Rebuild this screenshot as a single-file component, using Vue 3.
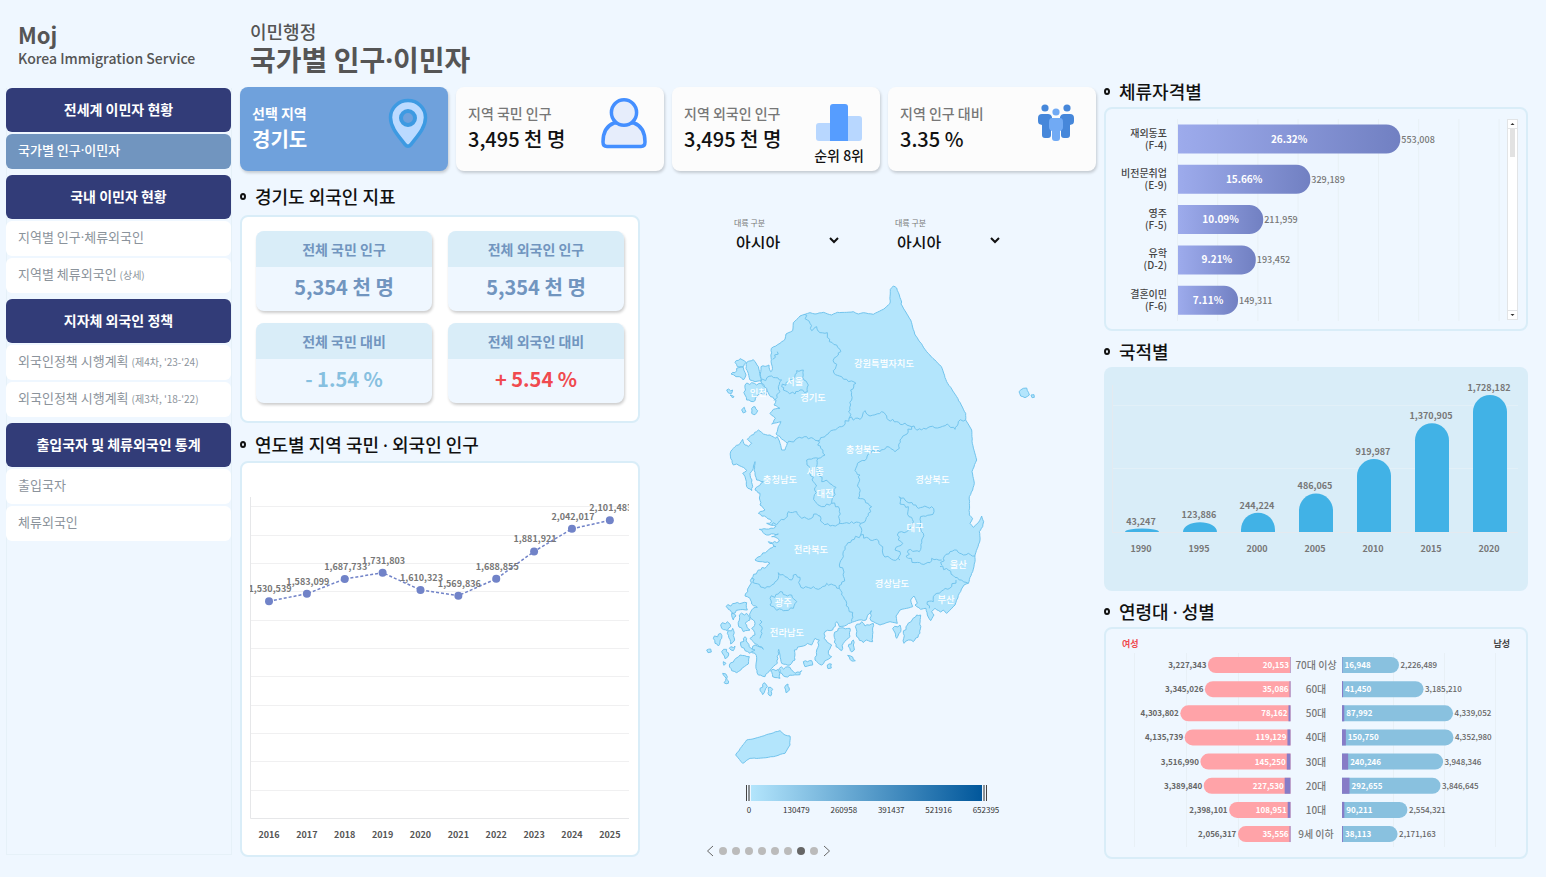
<script setup>
import { h, ref } from 'vue'

const menu = [
  { title: '전세계 이민자 현황', items: [{ label: '국가별 인구·이민자', active: true }] },
  { title: '국내 이민자 현황', items: [{ label: '지역별 인구·체류외국인' }, { label: '지역별 체류외국인', note: '(상세)' }] },
  {
    title: '지자체 외국인 정책',
    items: [
      { label: '외국인정책 시행계획', note: "(제4차, '23-'24)" },
      { label: '외국인정책 시행계획', note: "(제3차, '18-'22)" }
    ]
  },
  { title: '출입국자 및 체류외국인 통계', items: [{ label: '출입국자' }, { label: '체류외국인' }] }
]

/* Korean text whose middle dots are set in a proportional Latin face */
const Dotted = (props) =>
  h('span', props.text.split(/(·)/).map((t) => (t === '·' ? h('span', { class: 'mid-dot' }, t) : t)))
Dotted.props = ['text']

const indicators = [
  { title: '전체 국민 인구', value: '5,354 천 명', tone: '' },
  { title: '전체 외국인 인구', value: '5,354 천 명', tone: '' },
  { title: '전체 국민 대비', value: '- 1.54 %', tone: 'down' },
  { title: '전체 외국인 대비', value: '+ 5.54 %', tone: 'up' }
]

const fmt = (n) => n.toLocaleString('en-US')

/* Yearly population line chart */
const yearly = [1530539, 1583099, 1687733, 1731803, 1610323, 1569836, 1688855, 1881921, 2042017, 2101483].map((v, i) => ({
  year: 2016 + i,
  v,
  x: 27 + i * 37.87,
  y: 355 - (v / 2200000) * 311.6
}))
const yearlyLine = yearly.map((p) => `${p.x},${p.y}`).join(' ')
const yearlyGrid = Array.from({ length: 11 }, (_, i) => Math.round(355 - (i + 1) * 28.33) + 0.5)

/* Visa status bars */
const visas = [
  ['재외동포', '(F-4)', '26.32%', 553008],
  ['비전문취업', '(E-9)', '15.66%', 329189],
  ['영주', '(F-5)', '10.09%', 211959],
  ['유학', '(D-2)', '9.21%', 193452],
  ['결혼이민', '(F-6)', '7.11%', 149311]
].map(([name, code, pct, v], i) => {
  const w = (v / 100000) * 40.2
  const y = 15.5 + i * 40.3
  return { name, code, pct, v, w, y, d: `M72 ${y}h${w - 14}a14 14 0 0 1 14 14v1a14 14 0 0 1 -14 14h${-(w - 14)}z` }
})

/* Nationality columns */
const nations = [43247, 123886, 244224, 486065, 919987, 1370905, 1728182].map((v, i) => {
  const ht = (v / 1000000) * 79.3
  const r = Math.min(17, ht)
  const x = 21 + i * 58
  return { v, year: 1990 + i * 5, x: x + 16, ht, d: `M${x} 165v${-(ht - r)}a17 ${r} 0 0 1 34 0v${ht - r}z` }
})

/* Age and gender pyramid */
const ages = [
  ['70대 이상', 3227343, 20153, 16948, 2226489],
  ['60대', 3345026, 35086, 41450, 3185210],
  ['50대', 4303802, 78162, 87992, 4339052],
  ['40대', 4135739, 119129, 150750, 4352980],
  ['30대', 3516990, 145250, 240246, 3948346],
  ['20대', 3389840, 227530, 292655, 3846645],
  ['10대', 2398101, 108951, 90211, 2554321],
  ['9세 이하', 2056317, 35556, 38113, 2171163]
].map(([name, f, ff, mf, m], i) => {
  const k = 25.6 / 1000000
  const y = 28 + i * 24.15
  const fw = f * k
  const mw = m * k
  return {
    name, f, ff, mf, m, y, fw, mw,
    fp: ff * k,
    mp: mf * k,
    fd: `M184.500 ${y}h${-(fw - 8)}a8 8 0 0 0 0 16h${fw - 8}z`,
    md: `M236 ${y}h${mw - 8}a8 8 0 0 1 0 16h${-(mw - 8)}z`
  }
})

/* Map geometry: points are roughened a little so borders look surveyed */
function rough(str, amp = 4, closed = false) {
  const pts = str.trim().split(/\s+/).map((p) => p.split(',').map(Number))
  if (closed) pts.push(pts[0])
  let seed = 7
  const rnd = () => {
    seed = (seed * 16807) % 2147483647
    return seed / 2147483647 - 0.5
  }
  const out = [pts[0]]
  for (let i = 1; i < pts.length; i++) {
    const [ax, ay] = pts[i - 1]
    const [bx, by] = pts[i]
    const len = Math.hypot(bx - ax, by - ay)
    const n = Math.max(1, Math.round(len / 7))
    for (let j = 1; j < n; j++) {
      const o = rnd() * amp * 2
      const t = j / n
      out.push([ax + (bx - ax) * t - ((by - ay) / len) * o, ay + (by - ay) * t + ((bx - ax) / len) * o])
    }
    out.push([bx, by])
  }
  return 'M' + out.map((p) => p.map((n) => n.toFixed(1)).join(' ')).join('L') + (closed ? 'Z' : '')
}

const mainland = [
  rough(`580,18 590,24 605,66 603,72 632,120 644,162 680,215 724,260 740,305 770,350 797,400 797,420 815,450 817,490 830,540 816,575 823,610 818,630 808,650 808,705 818,715 810,730 820,742 835,728 845,708 851,725 848,740 838,755 840,780 832,805 825,825 825,845 818,875 810,892 805,910 792,915 778,940 765,975 748,992 740,1000 730,990 722,996 705,985 695,995 702,1005 692,1022 682,1005 678,985 662,988 645,975 652,970 642,948 632,960 638,980 620,985 600,990 588,1008 592,1030 570,1025 540,1035 520,1025`, 0.8),
  rough(`520,1025 510,1015 514,992 506,1002 498,1020 470,1022 440,1035 418,1040 410,1025 398,1050 375,1055 372,1075 395,1095 385,1120 395,1130 380,1140 365,1155 345,1140 350,1110 358,1080 345,1075 335,1095 322,1090 310,1098 300,1100 283,1110 285,1140 270,1155 245,1150 240,1125 236,1108 232,1150 215,1165 195,1190 175,1185 168,1165 170,1140 165,1120 150,1112 165,1095 190,1108 160,1085 150,1075 165,1065 155,1045 165,1030 150,1010 155,990 172,982 155,972 150,955 135,948 150,915 155,895 175,870 200,860 210,850 180,845 165,840 185,825 210,805 228,800 205,785 230,788 238,780 215,770 235,762 200,765 178,748 220,745 228,738 200,730 215,724 175,700 195,690 180,675 180,640 165,630`, 3),
  rough(`165,630 172,620 190,605 170,600 162,570 165,545 160,565 150,580 158,620 155,632 140,620 135,590 128,580 140,572 125,560 110,552 100,555 92,535 92,515 105,500 120,490 128,478 135,495 145,500 155,490 142,478 150,470 170,455 175,450 190,462 210,465 225,475 232,470 240,490 245,510 255,510 262,490 250,480 228,462 235,440 243,425 215,432 226,415 210,400 220,388 240,385 222,375 228,360 208,345 200,325 185,310 182,290 183,260 207,255 212,275 216,272 214,205`, 2),
  rough(`214,205 240,190 255,178 258,162 278,152 280,128 300,108 315,103 330,98 345,102 370,97 395,105 412,97 440,97 460,95 475,102 490,98 520,103 550,88 570,70 571,28 580,18`, 0.8)
].map((d, i) => (i ? d.replace(/^M[^L]*/, '') : d)).join('')

const borders = [
  '313,103 322,120 330,130 335,152 350,140 360,158 382,158 388,185 410,195 420,208 415,225 402,235 408,260 402,280 425,290 440,298 468,310 452,330 455,360 450,390 447,415',
  '447,415 480,418 495,392 510,408 545,395 560,408 565,420 590,425 620,435 635,440',
  '635,440 645,445 665,450 690,440 720,442 742,432 765,448 775,425 796,420',
  '635,440 615,465 600,480 598,505 585,515 560,500 540,515 520,510 500,535 480,545 465,572 480,585 475,610 478,640 475,655 495,660 515,680 505,700 495,725 482,730',
  '447,415 425,440 400,450 375,470 352,482 320,470 285,480 262,490',
  '352,482 362,505 375,525 355,535 320,540 330,575 340,605 350,618 342,650 350,670 365,680 380,672 395,670 400,650 408,622 385,605 365,605 360,580 350,560 355,535',
  '395,670 415,680 418,695 418,730',
  '215,735 235,728 262,710 265,695 290,695 300,710 325,718 350,702 360,708 368,728 390,738 420,730 440,728 455,725 482,730 482,765',
  '482,765 455,780 435,800 430,830 418,855 430,870 433,895 418,925',
  '155,895 165,910 195,925 215,915 235,895 235,878 255,890 275,900 280,885 300,892 300,915 310,925 340,920 355,928 380,910 400,915 418,925 425,945 440,970 457,1005 455,1025',
  '482,765 510,780 530,778 548,800 550,825 575,838 600,840',
  '625,835 645,848 665,852 690,848 695,835 725,840',
  '725,855 730,835 750,815 770,810 790,825 805,820 825,828',
  '720,860 745,870 765,892 785,900 805,910',
  '768,900 755,920 730,930 700,950 700,965 682,965 688,985',
  '623,835 625,810 658,815 665,780 670,760 660,740 660,718 670,708 690,705 702,695 695,680 655,685 640,675 615,660 598,650 600,672 625,680 627,710 640,725 635,740 620,755 605,755 592,765 595,780 608,790 585,810 600,815 595,835',
  '210,955 235,942 240,935 262,948 275,945 290,965 280,985 250,992 225,985 210,975 210,955',
  '245,320 265,305 285,290 290,272 310,270 312,300 325,315 322,335 300,330 285,342 262,335 250,330 245,320',
  '182,305 215,288 245,300 235,320 240,335 222,362',
  '180,1020 186,1060 180,1075',
  '232,215 226,232 218,238'
].map((b) => rough(b, 5))

const islands = [
  ['140,247 160,239 175,260 184,302 165,305 150,300 145,280 138,265', 1],
  ['105,247 120,236 138,247 130,260 112,260', 2],
  ['93,282 105,278 110,265 130,262 138,285 130,300 118,290 108,290', 3],
  ['135,315 155,308 170,315 185,310 198,325 200,345 180,340 160,365 140,360 135,345', 4],
  ['80,330 98,330 95,340 84,338', 3],
  ['90,345 102,350 98,354', 1],
  ['125,390 133,382 138,395 130,399', 1],
  ['155,385 165,380 173,392 165,404 155,400', 2],
  ['957,335 970,325 980,324 988,345 975,353 962,348', 1],
  ['993,345 1002,344 1003,352 996,353', 1],
  ['78,980 105,970 140,968 142,990 115,990 100,1000 85,988', 4],
  ['95,1000 108,1008 100,1020', 3],
  ['62,1035 82,1025 92,1040 82,1052 65,1045', 4],
  ['118,1005 140,1000 150,1020 135,1030 150,1050 130,1055 115,1035', 4],
  ['82,1060 98,1045 104,1080 92,1092', 4],
  ['40,1075 62,1060 65,1075 55,1098 45,1090', 4],
  ['20,1110 32,1107 34,1116 24,1118', 1],
  ['65,1115 80,1108 86,1125 75,1136', 4],
  ['88,1105 105,1098 100,1112', 3],
  ['122,1095 135,1070 148,1100 165,1110 150,1120 135,1112', 4],
  ['88,1155 120,1125 148,1130 145,1152 110,1178 95,1172', 2],
  ['68,1180 82,1190 85,1210 72,1208 78,1195', 4],
  ['70,1145 78,1150 72,1156', 1],
  ['180,1232 192,1208 202,1220 188,1244', 3],
  ['205,1222 218,1228 212,1248 204,1240', 3],
  ['254,1222 264,1212 268,1230 258,1238', 2],
  ['212,1172 235,1168 240,1195 218,1190', 3],
  ['238,1165 270,1162 285,1180 305,1172 300,1184 255,1190 240,1178', 4],
  ['310,1145 335,1142 338,1155 315,1160', 2],
  ['382,1155 394,1152 394,1164 384,1166', 2],
  ['402,1065 415,1045 450,1045 450,1070 430,1090 425,1112 408,1100', 3],
  ['445,1100 460,1080 463,1110 455,1116', 3],
  ['443,1126 452,1128 466,1142 455,1143', 2],
  ['466,1040 485,1025 495,1038 520,1030 518,1085 500,1080 490,1088 470,1070', 3],
  ['578,1045 600,1035 602,1055 590,1075', 3],
  ['610,1060 622,1035 650,1005 662,1005 660,1060 640,1085 625,1080 612,1090', 3],
  ['107,1425 125,1400 140,1380 165,1375 240,1352 255,1365 270,1368 270,1395 255,1420 220,1430 175,1435 150,1435 128,1450 118,1438', 1]
].map(([p, a]) => rough(p, a, true))

const regions = [
  ['강원특별자치도', 552, 252], ['경기도', 339, 354], ['서울', 284, 306], ['인천', 175, 339],
  ['충청북도', 489, 510], ['세종', 346, 575], ['충청남도', 240, 599], ['대전', 375, 640],
  ['경상북도', 697, 599], ['전라북도', 333, 808], ['대구', 645, 742], ['울산', 775, 854],
  ['경상남도', 576, 911], ['부산', 738, 959], ['광주', 250, 967], ['전라남도', 261, 1058]
]

const continentA = ref('아시아')
const continentB = ref('아시아')
const page = ref(6)
</script>

<template>
  <div class="page">
    <aside class="side">
      <div class="brand">
        <strong>Moj</strong>
        <span>Korea Immigration Service</span>
      </div>
      <nav class="menu">
        <section v-for="g in menu" :key="g.title" class="group">
          <h2>{{ g.title }}</h2>
          <a v-for="it in g.items" :key="it.label + it.note" href="#" :class="{ active: it.active }"><Dotted :text="it.label" /><small v-if="it.note">{{ it.note }}</small></a>
        </section>
      </nav>
    </aside>

    <main class="main">
      <header class="heading">
        <p>이민행정</p>
        <h1><Dotted text="국가별 인구·이민자" /></h1>
      </header>

      <div class="cards">
        <article class="card picked">
          <div><span>선택 지역</span><b>경기도</b></div>
          <figure>
            <svg width="48" height="52" viewBox="0 0 48 52">
              <path d="M24 3.500c-9.500 0-17.500 7.500-17.500 17 0 11 9.500 20 14.500 27q3 3.500 6 0c5-7 14.500-16 14.500-27 0-9.500-8-17-17.500-17z" fill="#bbdaff" stroke="#3d9ae2" stroke-width="3.500" />
              <circle cx="24" cy="21" r="7" fill="#6fa1dc" stroke="#3d9ae2" stroke-width="4" />
            </svg>
          </figure>
        </article>
        <article class="card">
          <div><span>지역 국민 인구</span><b>3,495 천 명</b></div>
          <figure>
            <svg width="48" height="52" viewBox="0 0 48 52">
              <path d="M14 26C6 29 3 37 3 45q0 4.500 4 4.500h34q4 0 4-4.500C45 37 42 29 34 26z" fill="#e6edfb" stroke="#448fff" stroke-width="3.500" />
              <ellipse cx="24" cy="15.500" rx="12.600" ry="12.800" fill="#e6edfb" stroke="#448fff" stroke-width="3.500" />
            </svg>
          </figure>
        </article>
        <article class="card">
          <div><span>지역 외국인 인구</span><b>3,495 천 명</b></div>
          <figure>
            <svg width="48" height="52" viewBox="0 0 48 52">
              <rect x="1" y="26" width="20" height="18" rx="3" fill="#b8d7ff" />
              <rect x="27" y="19" width="20" height="25" rx="3" fill="#b8d7ff" />
              <path d="M15 44V10q0-3 3-3h12q3 0 3 3v34z" fill="#569dff" />
            </svg>
            <figcaption>순위 8위</figcaption>
          </figure>
        </article>
        <article class="card">
          <div><span>지역 인구 대비</span><b>3.35 %</b></div>
          <figure>
            <svg width="48" height="52" viewBox="0 0 48 52">
              <g fill="#4687da">
                <circle cx="13" cy="11" r="3.600" /><circle cx="35" cy="11" r="3.600" />
                <path d="M9 17h7q3 0 4 3v5l-1 2v11q0 3-3 3h-3q-3 0-3-3V28l-3-1q-1-1-1-3v-3q0-4 4-4z" />
                <path d="M39 17h-7q-3 0-4 3v5l1 2v11q0 3 3 3h3q3 0 3-3V28l3-1q1-1 1-3v-3q0-4-4-4z" />
              </g>
              <g fill="#71aaf4">
                <circle cx="24" cy="15" r="3.600" />
                <path d="M20 21h8q3 0 3 4v5q0 3-3 4v7q0 3-3 3h-2q-3 0-3-3v-7q-3-1-3-4v-5q0-4 3-4z" />
              </g>
            </svg>
          </figure>
        </article>
      </div>

      <div class="body">
        <div class="left">
          <h3 class="title"><i></i>경기도 외국인 지표</h3>
          <section class="panel white indicators">
            <article v-for="n in indicators" :key="n.title" class="metric">
              <h4>{{ n.title }}</h4>
              <p :class="n.tone">{{ n.value }}</p>
            </article>
          </section>

          <h3 class="title second"><i></i><Dotted text="연도별 지역 국민 · 외국인 인구" /></h3>
          <section class="panel white">
            <svg class="chart" viewBox="0 0 396 392">
              <clipPath id="plot"><rect x="8" y="20" width="379" height="337" /></clipPath>
              <path v-for="y in yearlyGrid" :key="y" :d="`M8 ${y}H387`" stroke="#f0f0f1" />
              <path d="M8.500 34V355.500H387" fill="none" stroke="#e6e7e9" />
              <g clip-path="url(#plot)">
                <polyline :points="yearlyLine" fill="none" stroke="#7183c8" stroke-width="1.500" stroke-dasharray="3 2" />
                <g v-for="p in yearly" :key="p.year">
                  <circle :cx="p.x" :cy="p.y" r="4" fill="#7183c8" />
                  <text class="num" :x="p.x + 1" :y="p.y - 9" text-anchor="middle">{{ fmt(p.v) }}</text>
                </g>
              </g>
              <text v-for="p in yearly" :key="p.year" class="tick" :x="p.x" y="375" text-anchor="middle">{{ p.year }}</text>
            </svg>
          </section>
        </div>

        <div class="mapside">
          <div class="filters">
            <label>대륙 구분
              <select v-model="continentA"><option>아시아</option><option>유럽</option></select>
            </label>
            <label>대륙 구분
              <select v-model="continentB"><option>아시아</option><option>유럽</option></select>
            </label>
          </div>
          <svg class="map" viewBox="0 0 1020 1470">
            <g stroke="#72c4ed" stroke-width="3" stroke-linejoin="round">
              <path :d="mainland + 'Z'" fill="#b3e5fc" />
              <path v-for="(d, i) in islands" :key="i" :d="d" fill="#b3e5fc" />
              <path v-for="(d, i) in borders" :key="'b' + i" :d="d" fill="none" />
            </g>
            <text v-for="[n, x, y] in regions" :key="n" :x="x" :y="y + 10" text-anchor="middle">{{ n }}</text>
          </svg>
          <svg class="legend" viewBox="0 0 270 36">
            <defs>
              <linearGradient id="scale"><stop offset="0" stop-color="#b3e5fc" /><stop offset="1" stop-color="#01579b" /></linearGradient>
            </defs>
            <rect x="16" y="2" width="231" height="16" fill="url(#scale)" />
            <path d="M11.500 2v16M251.500 2v16" stroke="#444" />
            <path d="M14 2v16M249 2v16" stroke="#8d9296" stroke-width="2" />
            <text v-for="(v, i) in [0, 130479, 260958, 391437, 521916, 652395]" :key="v" :x="14 + i * 47.400" y="30" text-anchor="middle">{{ v }}</text>
          </svg>
          <div class="pager">
            <button type="button" class="arrow" aria-label="이전"><svg width="8" height="12" viewBox="0 0 8 12"><path d="M7 1 1.500 6 7 11" /></svg></button>
            <button v-for="n in 8" :key="n" type="button" class="dot" :class="{ on: n - 1 === page }" :aria-label="n + '쪽'" @click="page = n - 1"></button>
            <button type="button" class="arrow" aria-label="다음"><svg width="8" height="12" viewBox="0 0 8 12"><path d="M1 1 6.500 6 1 11" /></svg></button>
          </div>
        </div>
      </div>
    </main>

    <div class="right">
      <h3 class="title"><i></i>체류자격별</h3>
      <section class="panel">
        <svg class="chart" viewBox="0 0 420 220">
          <defs>
            <linearGradient id="visa"><stop offset="0" stop-color="#9dabec" /><stop offset="1" stop-color="#7180c2" /></linearGradient>
          </defs>
          <path v-for="i in 9" :key="i" :d="`M${31.300 + i * 40.200} 10V212`" stroke="#e8f0f6" />
          <g v-for="b in visas" :key="b.code">
            <path :d="b.d" fill="url(#visa)" />
            <text class="pct" :x="72 + b.w / 2" :y="b.y + 18" text-anchor="middle">{{ b.pct }}</text>
            <text class="val" :x="73 + b.w" :y="b.y + 18">{{ fmt(b.v) }}</text>
            <text class="cat" x="61" :y="b.y + 12" text-anchor="end">{{ b.name }}</text>
            <text class="cat" x="61" :y="b.y + 24" text-anchor="end">{{ b.code }}</text>
          </g>
          <rect x="401.500" y="10.500" width="10" height="200" fill="#fff" stroke="#e2e4e6" />
          <path d="M401 19.500h11M401 201.500h11" stroke="#e2e4e6" />
          <rect x="404" y="20" width="5" height="28" fill="#e2e2e2" />
          <path d="M404.500 16l2-2 2 2zM404.500 205l2 2 2-2z" fill="#333" />
        </svg>
      </section>

      <h3 class="title"><i></i>국적별</h3>
      <section class="panel filled">
        <svg class="chart" viewBox="0 0 424 224">
          <path d="M8 101.500H414M8 38.500H414" stroke="#e2f0f8" />
          <path d="M8.500 18V165.500H414" fill="none" stroke="#e4eaf0" />
          <g v-for="b in nations" :key="b.year">
            <path :d="b.d" fill="#41b2e6" />
            <text class="num" :x="b.x" :y="161 - b.ht" text-anchor="middle">{{ fmt(b.v) }}</text>
            <text class="num" :x="b.x" y="185" text-anchor="middle">{{ b.year }}</text>
          </g>
        </svg>
      </section>

      <h3 class="title"><i></i><Dotted text="연령대 · 성별" /></h3>
      <section class="panel">
        <svg class="chart" viewBox="0 0 420 228">
          <path v-for="x in [28.500, 80.500, 132.500, 287.500, 338.500, 389.500]" :key="x" :d="`M${x} 24V218`" stroke="#e8f0f6" />
          <text class="sex female" x="16" y="18">여성</text>
          <text class="sex" x="404" y="18" text-anchor="end">남성</text>
          <g v-for="a in ages" :key="a.name">
            <path :d="a.fd" fill="#ffa3a8" />
            <rect :x="184.500 - a.fp" :y="a.y" :width="a.fp" height="16" fill="#877cc7" />
            <path :d="a.md" fill="#89c1df" />
            <rect x="236" :y="a.y" :width="a.mp" height="16" fill="#877cc7" />
            <text class="tiny strong" :x="183 - a.fw" :y="a.y + 11" text-anchor="end">{{ fmt(a.f) }}</text>
            <text class="tiny white" :x="183.500 - a.fp" :y="a.y + 11" text-anchor="end">{{ fmt(a.ff) }}</text>
            <text class="age" x="210" :y="a.y + 12" text-anchor="middle">{{ a.name }}</text>
            <text class="tiny white" :x="238 + a.mp" :y="a.y + 11">{{ fmt(a.mf) }}</text>
            <text class="tiny" :x="237.500 + a.mw" :y="a.y + 11">{{ fmt(a.m) }}</text>
          </g>
        </svg>
      </section>
    </div>
  </div>
</template>

<style>
body {
  background: #eff7ff;
}
.mid-dot {
  font-family: "Noto Sans", sans-serif;
  line-height: 1;
}
</style>

<style scoped>
.page {
  box-sizing: border-box;
  min-height: 100vh;
  padding: 0 18px 18px 6px;
  display: grid;
  grid-template-columns: 226px minmax(0, 856fr) minmax(0, 424fr);
  gap: 8px;
  font-family: "Noto Sans CJK KR", "Noto Sans", sans-serif;
  background: #eff7ff;
  color: #111;
}
.page * {
  box-sizing: border-box;
}
h1, h2, h3, h4, p, figure {
  margin: 0;
}
svg {
  display: block;
}

/* Sidebar */
.side {
  display: flex;
  flex-direction: column;
  padding-bottom: 4px;
}
.brand {
  height: 88px;
  padding: 20px 0 0 12px;
  display: flex;
  flex-direction: column;
  color: #555;
}
.brand strong {
  font-size: 22px;
  line-height: 28px;
}
.brand span {
  font-size: 14px;
  line-height: 20px;
  font-weight: 500;
}
.menu {
  flex: 1;
  display: flex;
  flex-direction: column;
  gap: 6px;
  border: 1px solid #e6f1f8;
  border-top: 0;
}
.group {
  margin: 0 0 0 -1px;
  display: flex;
  flex-direction: column;
  gap: 2px;
}
.group h2 {
  height: 44px;
  line-height: 43px;
  border-radius: 6px;
  background: #323c78;
  color: #fff;
  text-align: center;
  font-size: 14px;
}
.group a {
  height: 35px;
  line-height: 32px;
  padding-left: 12px;
  border-radius: 6px;
  background: #fff;
  color: #8b939b;
  font-size: 13px;
  text-decoration: none;
}
.group a small {
  margin-left: 3px;
  font-size: 10px;
}
.group a.active {
  background: #7195bf;
  color: #fff;
  font-weight: 500;
}

/* Heading and summary cards */
.heading {
  height: 87px;
  padding: 19px 0 0 10px;
  color: #555;
}
.heading p {
  font-size: 18px;
  line-height: 24px;
  font-weight: 500;
}
.heading h1 {
  font-size: 28px;
  line-height: 32px;
}
.cards {
  display: grid;
  grid-template-columns: repeat(4, minmax(0, 1fr));
  gap: 8px;
}
.card {
  height: 84px;
  padding: 10px 16px 0 12px;
  display: flex;
  justify-content: space-between;
  border-radius: 8px;
  background: #fcfcfc;
  box-shadow: 1px 2px 3px rgba(0, 0, 0, 0.18);
}
.card div {
  display: flex;
  flex-direction: column;
  padding-top: 5px;
}
.card span {
  font-size: 14px;
  line-height: 22px;
  font-weight: 500;
  color: #777;
}
.card b {
  font-size: 20px;
  line-height: 30px;
  font-weight: 500;
  color: #111;
}
.card.picked {
  background: #6fa1dc;
}
.card.picked span,
.card.picked b {
  color: #fff;
  font-weight: 700;
}
.card figure {
  text-align: center;
}
.card figcaption {
  font-size: 14px;
  line-height: 12px;
  font-weight: 500;
}
.card figure svg {
  margin: 0 auto;
}

/* Section titles and panels */
.title {
  display: flex;
  align-items: center;
  gap: 9px;
  font-size: 18px;
  line-height: 29px;
  font-weight: 500;
}
.title i {
  width: 6px;
  height: 7px;
  border: 2px solid #111;
  border-radius: 50%;
}
.panel {
  border: 2px solid #d9edf8;
  border-radius: 8px;
}
.white.panel {
  background: #fff;
}
.filled {
  border: 0;
  background: #d9edf8;
}
.chart {
  width: 100%;
  height: auto;
}
.body {
  display: grid;
  grid-template-columns: minmax(0, 400fr) minmax(0, 456fr);
}
.left .title {
  margin: 11px 0 4px;
}
.left .title.second {
  margin: 7px 0 2px;
}
.indicators {
  padding: 14px 14px 18px;
  display: grid;
  grid-template-columns: 1fr 1fr;
  gap: 12px 16px;
}
.metric {
  border-radius: 8px;
  overflow: hidden;
  text-align: center;
  background: #eff7ff;
  box-shadow: 1px 2px 3px rgba(0, 0, 0, 0.2);
  color: #7195bf;
}
.metric h4 {
  font-size: 14px;
  line-height: 36px;
  font-weight: 700;
  background: #d9edf8;
}
.metric p {
  height: 44px;
  font-size: 20px;
  line-height: 39px;
  font-weight: 700;
}
.metric p.down {
  color: #86c0e0;
}
.metric p.up {
  color: #f04a4f;
}

/* Map column */
.mapside {
  padding: 46px 52px 0 60px;
  display: flex;
  flex-direction: column;
}
.filters {
  display: flex;
  gap: 49px;
  padding-left: 32px;
}
.filters label {
  width: 112px;
  padding-left: 2px;
  font-size: 8px;
  line-height: 12px;
  color: #777;
}
.filters select {
  display: block;
  width: 110px;
  height: 23px;
  margin-left: -2px;
  padding: 0 0 3px;
  border: 0;
  background: transparent;
  color: #111;
  font: 500 16px "Noto Sans CJK KR", sans-serif;
}
.map {
  width: 100%;
  max-width: 340px;
  margin-top: 28px;
  overflow: visible;
}
.map text {
  fill: #fff;
  font-size: 28px;
  font-weight: 500;
}
.legend {
  width: 270px;
  margin: 13px 0 0 35px;
}
.legend text {
  font-size: 8px;
  fill: #333;
}
.pager {
  display: flex;
  align-items: center;
  gap: 5px;
  margin: 26px 0 0 6px;
}
.pager button {
  border: 0;
  padding: 0;
  background: none;
}
.pager .arrow path {
  fill: none;
  stroke: #666;
}
.pager .dot {
  width: 8px;
  height: 8px;
  border-radius: 50%;
  background: #bbb;
}
.pager .dot.on {
  background: #666;
}

/* Right column */
.right {
  padding-top: 77px;
}
.right .title {
  margin-bottom: 1px;
}
.right .panel + .title {
  margin-top: 6px;
}

/* Chart labels */
.cat, .pct, .age {
  font-size: 10px;
}
.num, .val, .tick {
  font-size: 9px;
}
.num, .val, .age {
  fill: #777;
  font-weight: 500;
}
.num {
  font-weight: 700;
}
.tick {
  fill: #555;
  font-weight: 700;
}
.cat {
  fill: #444;
  font-weight: 500;
}
.pct {
  fill: #fff;
  font-weight: 700;
}
.sex {
  font-size: 9px;
  font-weight: 700;
  fill: #444;
}
.sex.female {
  fill: #f04a4f;
}
.tiny {
  font-size: 8px;
  font-weight: 500;
  fill: #666;
}
.tiny.strong {
  font-weight: 700;
}
.tiny.white {
  font-weight: 700;
  fill: #fff;
}
</style>
